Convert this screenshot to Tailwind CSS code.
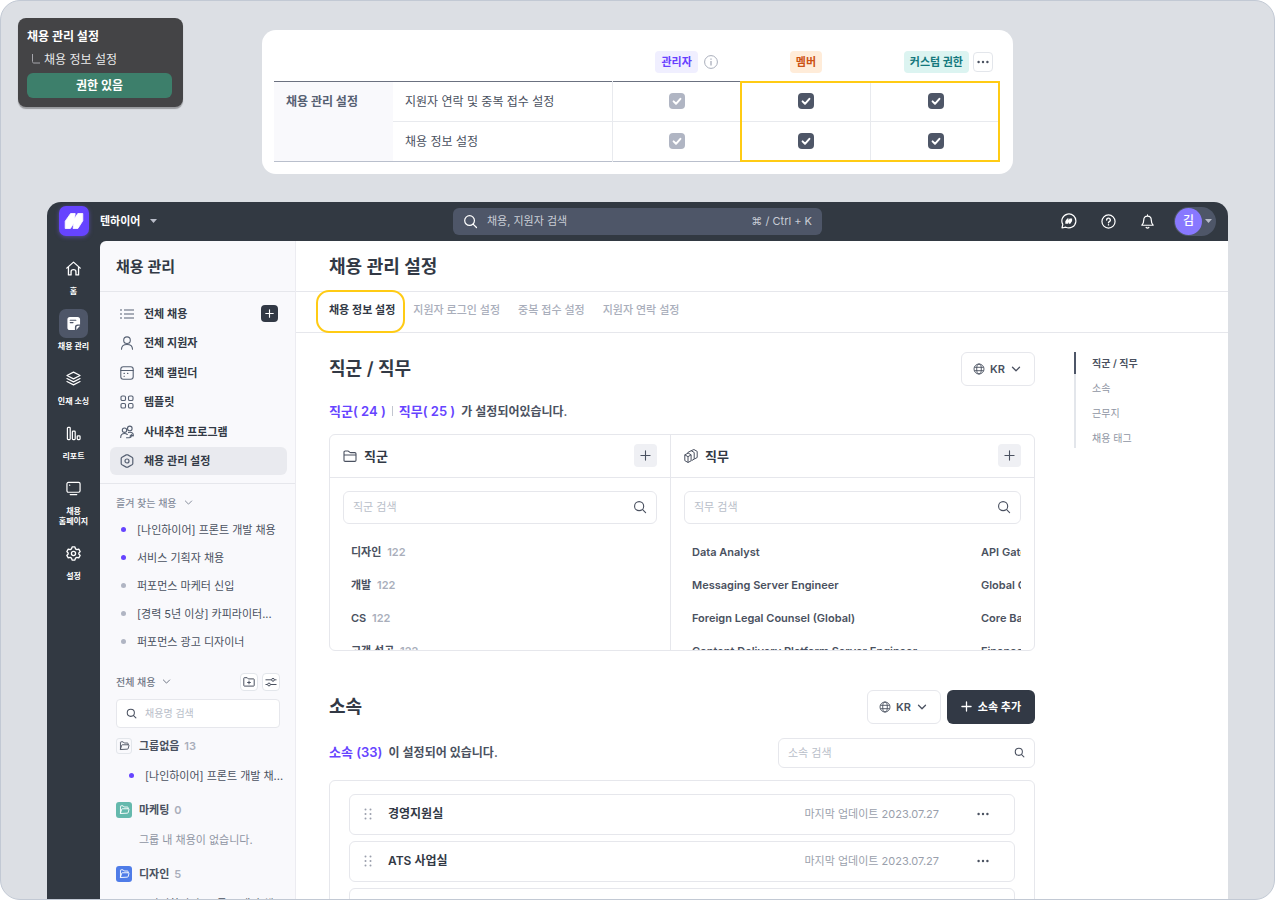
<!DOCTYPE html>
<html lang="ko">
<head>
<meta charset="utf-8">
<meta name="viewport" content="width=device-width, initial-scale=1">
<title>채용 관리 설정</title>
<script src="https://cdn.jsdelivr.net/npm/@tailwindcss/browser@4"></script>
</head>
<body class="bg-white font-['Inter','Noto_Sans_CJK_KR',sans-serif] text-[11px] leading-4 text-[#4a5160]">

<!-- shared icon shapes -->
<svg class="hidden" aria-hidden="true">
  <symbol id="i-search" viewBox="0 0 16 16" fill="none" stroke="currentColor" stroke-linecap="round"><circle cx="7" cy="7" r="5.2"/><path d="M11 11l3.4 3.4"/></symbol>
  <symbol id="i-plus" viewBox="0 0 12 12" fill="none" stroke="currentColor" stroke-linecap="round"><path d="M6 1v10M1 6h10"/></symbol>
  <symbol id="i-chevron" viewBox="0 0 10 10" fill="none" stroke="currentColor" stroke-linecap="round" stroke-linejoin="round"><path d="M1.5 3.3L5 6.8l3.5-3.5"/></symbol>
  <symbol id="i-check" viewBox="0 0 16 16" fill="none" stroke="currentColor" stroke-width="2" stroke-linecap="round" stroke-linejoin="round"><path d="M4.6 8.4l2.4 2.4 4.4-5"/></symbol>
  <symbol id="i-dots" viewBox="0 0 14 4" fill="currentColor"><circle cx="2.6" cy="2" r="1.2"/><circle cx="7" cy="2" r="1.2"/><circle cx="11.4" cy="2" r="1.2"/></symbol>
  <symbol id="i-globe" viewBox="0 0 12 12" fill="none" stroke="currentColor" stroke-width="0.9"><circle cx="6" cy="6" r="5"/><ellipse cx="6" cy="6" rx="2.3" ry="5"/><path d="M1.4 4.3h9.2M1.4 7.7h9.2"/></symbol>
  <symbol id="i-n" viewBox="0 0 20 18" fill="currentColor" stroke="currentColor" stroke-width=".8" stroke-linejoin="round"><path d="M1.200 16.500V9.200L6.600 1.500h4.600L10.600 6.600l3.200-5.100h5V8.800l-4.900 7.700H9.100l.7-5.300-3.400 5.300z"/></symbol>
  <symbol id="i-open" viewBox="0 0 12 12" fill="none" stroke="currentColor" stroke-width="1" stroke-linecap="round" stroke-linejoin="round"><path d="M1.600 10V2.600c0-.4.200-.6.600-.6h2.300l1.200 1.300h3.600c.4 0 .6.200.6.600v1.300M1.600 10l1.300-4.200c.1-.400.300-.6.700-.6h6.800c.4 0 .6.300.5.700l-.9 3.500c-.1.400-.3.600-.7.600z"/></symbol>
  <symbol id="i-grip" viewBox="0 0 8 12" fill="currentColor"><circle cx="1.500" cy="1.500" r="1"/><circle cx="6.500" cy="1.500" r="1"/><circle cx="1.500" cy="6" r="1"/><circle cx="6.500" cy="6" r="1"/><circle cx="1.500" cy="10.500" r="1"/><circle cx="6.500" cy="10.500" r="1"/></symbol>
</svg>

<div class="flex h-screen flex-col overflow-hidden rounded-[20px] border border-[#c2c9d4] bg-[#dcdfe4]">

  <div class="grid grid-cols-[244px_1fr_244px] px-[17px] pt-[17px]">
    <aside class="h-[89px] w-[165px] rounded-lg bg-[#444446] px-[9px] pt-[9px] text-[12px] leading-5 text-white shadow-[0_2px_1px_rgba(0,0,0,0.3)]">
      <p class="font-bold">채용 관리 설정</p>
      <p class="mt-[3px] flex items-start text-[#e9e9ea]">
        <svg class="mx-1 mt-1 h-[10px] w-[9px]" viewBox="0 0 9 10" fill="none" stroke="#a5a5ab"><path d="M1.500 0v7.500c0 1 .500 1.500 1.500 1.500h6"/></svg>채용 정보 설정
      </p>
      <p class="mt-[3px] mr-0.5 h-[25px] rounded-md bg-[#3d7f6b] text-center leading-[25px] font-bold">권한 있음</p>
    </aside>

    <section class="mt-3 rounded-[14px] bg-white pt-[11px] pr-[13px] pb-3 pl-3">
      <div class="relative">
        <table class="w-full table-fixed border-collapse text-[12px]">
          <colgroup><col class="w-[119px]"><col class="w-[219px]"><col><col><col></colgroup>
          <thead>
            <tr class="h-10 border-b border-[#6b7180] leading-[22px]">
              <td></td><td></td>
              <th class="p-0 pt-0.5 font-bold"><span class="flex items-center justify-center gap-[6px] pl-5"><span class="rounded bg-[#f0efff] px-[6px] text-[11px] text-[#6740ff]">관리자</span>
                <svg class="size-[14px] text-[#a9aebb]" viewBox="0 0 14 14" fill="none" stroke="currentColor"><circle cx="7" cy="7" r="6.400"/><path d="M7 6v4.500M7 3.400v1.300" stroke-width="1.300"/></svg></span></th>
              <th class="p-0 pt-0.5 font-bold"><span class="rounded bg-[#ffecd9] px-[6px] py-1 text-[11px] text-[#cc5214]">멤버</span></th>
              <th class="p-0 pt-0.5 font-bold"><span class="flex items-center justify-end gap-1 pr-[7px]"><span class="rounded bg-[#dcf4f1] px-[6px] text-[11px] whitespace-nowrap text-[#14787d]">커스텀 권한</span>
                <button class="grid size-5 place-items-center rounded border border-[#e3e6eb] text-[#4a5160]" aria-label="더보기"><svg class="h-1 w-[14px]"><use href="#i-dots"/></svg></button></span></th>
            </tr>
          </thead>
          <tbody>
            <tr class="h-10 border-b border-[#e8eaee]">
              <th rowspan="2" class="border-b border-[#b9bfcc] bg-[#f9f9fc] px-3 py-2.5 text-left align-top leading-5 font-bold text-[#566072]">채용 관리 설정</th>
              <td class="px-3 pt-0.5 pb-0">지원자 연락 및 중복 접수 설정</td>
              <td class="border-l border-[#e8eaee] p-0"><label class="mx-auto grid size-4 text-white"><input type="checkbox" checked disabled aria-label="관리자: 지원자 연락 및 중복 접수 설정" class="col-start-1 row-start-1 appearance-none rounded bg-[#b0b5c3]"><svg class="pointer-events-none col-start-1 row-start-1 size-4"><use href="#i-check"/></svg></label></td>
              <td class="border-l border-[#e8eaee] p-0"><label class="mx-auto grid size-4 text-white"><input type="checkbox" checked aria-label="멤버: 지원자 연락 및 중복 접수 설정" class="col-start-1 row-start-1 appearance-none rounded bg-[#4e5667]"><svg class="pointer-events-none col-start-1 row-start-1 size-4"><use href="#i-check"/></svg></label></td>
              <td class="border-l border-[#e8eaee] p-0"><label class="mx-auto grid size-4 text-white"><input type="checkbox" checked aria-label="커스텀 권한: 지원자 연락 및 중복 접수 설정" class="col-start-1 row-start-1 appearance-none rounded bg-[#4e5667]"><svg class="pointer-events-none col-start-1 row-start-1 size-4"><use href="#i-check"/></svg></label></td>
            </tr>
            <tr class="h-10 border-b border-[#b9bfcc]">
              <td class="px-3 pt-0.5 pb-0">채용 정보 설정</td>
              <td class="border-l border-[#e8eaee] p-0"><label class="mx-auto grid size-4 text-white"><input type="checkbox" checked disabled aria-label="관리자: 채용 정보 설정" class="col-start-1 row-start-1 appearance-none rounded bg-[#b0b5c3]"><svg class="pointer-events-none col-start-1 row-start-1 size-4"><use href="#i-check"/></svg></label></td>
              <td class="border-l border-[#e8eaee] p-0"><label class="mx-auto grid size-4 text-white"><input type="checkbox" checked aria-label="멤버: 채용 정보 설정" class="col-start-1 row-start-1 appearance-none rounded bg-[#4e5667]"><svg class="pointer-events-none col-start-1 row-start-1 size-4"><use href="#i-check"/></svg></label></td>
              <td class="border-l border-[#e8eaee] p-0"><label class="mx-auto grid size-4 text-white"><input type="checkbox" checked aria-label="커스텀 권한: 채용 정보 설정" class="col-start-1 row-start-1 appearance-none rounded bg-[#4e5667]"><svg class="pointer-events-none col-start-1 row-start-1 size-4"><use href="#i-check"/></svg></label></td>
            </tr>
          </tbody>
        </table>
        <div class="pointer-events-none absolute top-10 right-0 bottom-0 left-[calc(337px+(100%-338px)/3)] border-2 border-[#ffcb14]"></div>
      </div>
    </section>
  </div>

  <div class="mx-[46px] mt-7 flex min-h-0 flex-1 flex-col overflow-hidden rounded-t-[14px] bg-[#323942]">
    <header class="grid h-[39px] shrink-0 grid-cols-[1fr_369px_1fr] items-center">
      <div class="flex items-center">
        <span class="flex w-[53px] justify-center"><a href="#" aria-label="홈으로" class="grid size-[30px] place-items-center rounded-[7px] bg-[#6644ff] text-white shadow-[0_1px_4px_rgba(110,90,220,0.6)]"><svg class="h-[18px] w-5"><use href="#i-n"/></svg></a></span>
        <button class="flex items-center gap-[10px] text-[11px] font-bold text-white">텐하이어 <svg class="h-1 w-[7px]" viewBox="0 0 7 4" fill="#b9bdc9"><path d="M0 0h7L3.500 4z"/></svg></button>
      </div>
      <label class="flex h-[27px] items-center rounded-md bg-[#4e5668] px-[10px] text-[#c9cdd6]">
        <svg class="size-[15px] text-white" stroke-width="1.300"><use href="#i-search"/></svg>
        <input type="search" aria-label="채용, 지원자 검색" placeholder="채용, 지원자 검색" class="ml-[9px] min-w-0 flex-1 bg-transparent outline-none placeholder:text-[#c9cdd6]">
        <span>⌘ / Ctrl + K</span>
      </label>
      <div class="flex items-center justify-end pr-3 text-white">
        <button aria-label="채팅" class="mr-6"><svg class="size-4" viewBox="0 0 16 16" fill="none" stroke="currentColor" stroke-width="1.200" stroke-linejoin="round"><path d="M1 15l.8-3.600A7 7 0 1 1 4.800 14.200z"/><path d="M4.300 10.800V8.200l1.900-2.700h1.500l-.3 1.900 1.200-1.900h2.500v2.400l-1.800 2.900H7.700l.3-1.900-1.200 1.900z" fill="currentColor" stroke="none"/></svg></button>
        <button aria-label="도움말" class="mr-6"><svg class="size-[15px]" viewBox="0 0 16 16" fill="none" stroke="currentColor" stroke-width="1.300" stroke-linecap="round"><circle cx="8" cy="8" r="7"/><path d="M6 6.500a2 2 0 1 1 2.900 1.700c-.6.300-.9.600-.9 1.200M8 11.400v.2" stroke-width="1.500"/></svg></button>
        <button aria-label="알림" class="mr-[19px]"><svg class="size-[15px]" viewBox="0 0 16 16" fill="none" stroke="currentColor" stroke-width="1.300" stroke-linecap="round" stroke-linejoin="round"><path d="M8 1v1.200M8 2.200c2.600 0 4 1.900 4 4.200 0 3 .8 4.200 2 5.600H2c1.200-1.400 2-2.600 2-5.600 0-2.300 1.400-4.200 4-4.200zM6.600 14.400c.7.600 2.100.6 2.800 0"/></svg></button>
        <button aria-label="내 계정" class="flex h-[29px] w-[42px] items-center rounded-full bg-[#4e5668] pl-px"><span class="grid size-[27px] place-items-center rounded-full bg-[#8878ff] text-[12px] font-medium">김</span><svg class="ml-[3px] h-1 w-[7px]" viewBox="0 0 7 4" fill="#b9bdc9"><path d="M0 0h7L3.500 4z"/></svg></button>
      </div>
    </header>

    <div class="flex min-h-0 flex-1">
      <nav aria-label="주 메뉴" class="flex w-[53px] shrink-0 flex-col items-center gap-[13px] pt-[13px] text-center text-[8px] leading-[10px] font-bold text-white">
        <a href="#" class="flex flex-col items-center gap-[3px]"><span class="grid size-[29px] place-items-center"><svg class="size-[15px]" viewBox="0 0 16 16" fill="none" stroke="currentColor" stroke-width="1.400" stroke-linecap="round" stroke-linejoin="round"><path d="M.8 7.600L8 1.200l7.200 6.400M2.600 6.200V14.800H5.400V11.500c0-3 5.200-3 5.200 0v3.300h2.800V6.200"/></svg></span>홈</a>
        <a href="#" aria-current="page" class="flex flex-col items-center gap-[3px]"><span class="grid size-[29px] place-items-center rounded-[7px] bg-[#4e5668]"><svg class="size-[15px]" viewBox="0 0 16 16"><path d="M4 1h8.500C14 1 15 2 15 3.500V9h-2.500C10.500 9 9.500 10 9.500 12v3H4c-1.500 0-2.500-1-2.500-2.500v-9C1.500 2 2.500 1 4 1z" fill="#fff"/><path d="M11 15v-2.500c0-1.200.6-2 2-2h2z" fill="#fff"/><path d="M4.500 7h3M4.500 4.500h6" stroke="#4e5668" stroke-width="1.200" stroke-linecap="round"/></svg></span>채용 관리</a>
        <a href="#" class="flex flex-col items-center gap-[3px]"><span class="grid size-[29px] place-items-center"><svg class="size-[15px]" viewBox="0 0 16 16" fill="none" stroke="currentColor" stroke-width="1.200" stroke-linejoin="round" stroke-linecap="round"><path d="M8 1.200l7 3.600-7 3.600-7-3.600zM1 8l7 3.600L15 8M1 11.200l7 3.600 7-3.600"/></svg></span>인재 소싱</a>
        <a href="#" class="flex flex-col items-center gap-[3px]"><span class="grid size-[29px] place-items-center"><svg class="size-[15px]" viewBox="0 0 16 16" fill="none" stroke="currentColor" stroke-width="1.300"><rect x="1.500" y="1.500" width="3" height="13" rx=".8"/><rect x="6.800" y="5.500" width="3" height="9" rx=".8"/><rect x="12" y="10.500" width="3" height="4" rx=".8"/></svg></span>리포트</a>
        <a href="#" class="flex flex-col items-center gap-[3px]"><span class="grid size-[29px] place-items-center"><svg class="size-[15px]" viewBox="0 0 16 16" fill="none" stroke="currentColor" stroke-width="1.300" stroke-linecap="round"><rect x="1" y="1.500" width="14" height="10.500" rx="1.500"/><path d="M4.500 14.500h7M3.800 4.500h.2"/></svg></span><span>채용<br>홈페이지</span></a>
        <a href="#" class="flex flex-col items-center gap-[3px]"><span class="grid size-[29px] place-items-center"><svg class="size-[15px]" viewBox="0 0 16 16" fill="none" stroke="currentColor" stroke-width="1.400" stroke-linejoin="round"><path d="M6.500 1h3l.6 2 1.500.9 2-.5 1.500 2.600L13.700 7.500v1l1.400 1.500-1.500 2.600-2-.5-1.500.9-.6 2h-3l-.6-2-1.500-.9-2 .5L.9 10l1.400-1.500v-1L.9 6l1.500-2.600 2 .5L5.900 3z"/><circle cx="8" cy="8" r="2.200"/></svg></span>설정</a>
      </nav>

      <aside class="flex w-[196px] shrink-0 flex-col overflow-hidden rounded-tl-md border-r border-[#ececf1] bg-[#f9f9fc]">
        <h2 class="h-[51px] shrink-0 border-b border-[#e6e7ec] pl-4 text-[15px] leading-[52px] font-semibold text-[#323945]">채용 관리</h2>
        <nav aria-label="채용 관리" class="flex h-[192px] shrink-0 flex-col justify-between border-b border-[#e6e7ec] pt-2 pr-[8px] pb-[7px] pl-[10px] font-semibold text-[#323945]">
          <div class="flex items-center justify-between pr-[9px]">
            <a href="#" class="flex h-7 items-center gap-[10px] pl-[10px]"><svg class="size-[14px] text-[#566072]" viewBox="0 0 14 14" fill="none" stroke="currentColor" stroke-width="1.200"><path d="M4 3h10M4 7h10M4 11h10M0 3h2M0 7h2M0 11h2"/></svg>전체 채용</a>
            <button aria-label="채용 추가" class="grid size-[17px] place-items-center rounded bg-[#323945] text-white"><svg class="size-[9px]" stroke-width="1.500"><use href="#i-plus"/></svg></button>
          </div>
          <a href="#" class="flex h-7 items-center gap-[10px] pl-[10px]"><svg class="size-[14px] text-[#566072]" viewBox="0 0 14 14" fill="none" stroke="currentColor" stroke-width="1.100" stroke-linecap="round"><circle cx="7" cy="4.200" r="3.300"/><path d="M1.500 13.300c0-3 2-4.800 5.500-4.800s5.500 1.800 5.500 4.800"/></svg>전체 지원자</a>
          <a href="#" class="flex h-7 items-center gap-[10px] pl-[10px]"><svg class="size-[14px] text-[#566072]" viewBox="0 0 14 14" fill="none" stroke="currentColor" stroke-width="1.100" stroke-linecap="round"><rect x=".8" y=".8" width="12.400" height="12.400" rx="2.500"/><path d="M.8 4.500h12.400M4 7.400h.4M7.500 7.400h.4M4 10.300h.4" /></svg>전체 캘린더</a>
          <a href="#" class="flex h-7 items-center gap-[10px] pl-[10px]"><svg class="size-[14px] text-[#566072]" viewBox="0 0 14 14" fill="none" stroke="currentColor" stroke-width="1.100"><rect x="1" y="1" width="4.500" height="4.500" rx="1.300"/><rect x="8.500" y="1" width="4.500" height="4.500" rx="1.300"/><rect x="1" y="8.500" width="4.500" height="4.500" rx="1.300"/><rect x="8.500" y="8.500" width="4.500" height="4.500" rx="1.300"/></svg>템플릿</a>
          <a href="#" class="flex h-7 items-center gap-[10px] pl-[10px]"><svg class="size-[14px] text-[#566072]" viewBox="0 0 14 14" fill="none" stroke="currentColor" stroke-width="1.100" stroke-linecap="round" stroke-linejoin="round"><circle cx="4.500" cy="5.200" r="2.200"/><circle cx="9.800" cy="3.400" r="2.300"/><path d="M.7 12.500c0-2.300 1.300-4 3.800-4 1.300 0 2.200.4 2.800 1M8.500 7.600c2.800-.9 4.900.4 4.900 2.800M6.500 12.800h2.700c1.300 0 2.200-.8 2.200-2.200M10 11.200l1.500-1.500 1.500 1.500"/></svg>사내추천 프로그램</a>
          <a href="#" aria-current="page" class="flex h-7 items-center gap-[10px] rounded-md bg-[#e9eaef] pl-[10px]"><svg class="size-[14px] text-[#566072]" viewBox="0 0 14 14" fill="none" stroke="currentColor" stroke-width="1.200" stroke-linejoin="round"><path d="M6.200.9a1.600 1.600 0 0 1 1.600 0l4.200 2.300c.5.300.8.800.8 1.400v4.800c0 .6-.3 1.100-.8 1.400l-4.200 2.300a1.600 1.600 0 0 1-1.600 0L2 10.800c-.5-.3-.8-.8-.8-1.400V4.600c0-.6.300-1.100.8-1.400z"/><circle cx="7" cy="7" r="2"/></svg>채용 관리 설정</a>
        </nav>

        <div class="shrink-0 pt-[11px] pr-[15px] pl-4">
          <button class="flex items-center gap-[7px] text-[10px] font-medium text-[#868d9b]">즐겨 찾는 채용 <svg class="size-[9px]" stroke-width="1.100"><use href="#i-chevron"/></svg></button>
          <ul class="mt-[5px] whitespace-nowrap">
            <li class="flex h-7 items-center pl-[5px]"><span class="mr-[11px] size-[5px] rounded-full bg-[#6644ff]"></span><a href="#">[나인하이어] 프론트 개발 채용</a></li>
            <li class="flex h-7 items-center pl-[5px]"><span class="mr-[11px] size-[5px] rounded-full bg-[#6644ff]"></span><a href="#">서비스 기획자 채용</a></li>
            <li class="flex h-7 items-center pl-[5px]"><span class="mr-[11px] size-[5px] rounded-full bg-[#b0b5c3]"></span><a href="#">퍼포먼스 마케터 신입</a></li>
            <li class="flex h-7 items-center pl-[5px]"><span class="mr-[11px] size-[5px] rounded-full bg-[#b0b5c3]"></span><a href="#">[경력 5년 이상] 카피라이터...</a></li>
            <li class="flex h-7 items-center pl-[5px]"><span class="mr-[11px] size-[5px] rounded-full bg-[#b0b5c3]"></span><a href="#">퍼포먼스 광고 디자이너</a></li>
          </ul>
          <div class="mt-[17px] flex items-center gap-1">
            <button class="mr-auto flex items-center gap-[7px] text-[10px] font-medium text-[#6f7685]">전체 채용 <svg class="size-[9px]" stroke-width="1.100"><use href="#i-chevron"/></svg></button>
            <button aria-label="그룹 추가" class="grid size-[18px] place-items-center rounded border border-[#e3e6eb] bg-white"><svg class="size-3" viewBox="0 0 12 12" fill="none" stroke="currentColor" stroke-linejoin="round"><path d="M.8 2.300c0-.4.200-.6.600-.6h2.800l1.100 1.200h5.300c.4 0 .6.200.6.600v6c0 .4-.2.600-.6.600H1.400c-.4 0-.6-.2-.6-.6zM6 4.700v3.600M4.200 6.500h3.600"/></svg></button>
            <button aria-label="정렬" class="grid size-[18px] place-items-center rounded border border-[#e3e6eb] bg-white"><svg class="size-3" viewBox="0 0 12 12" fill="none" stroke="currentColor"><path d="M.5 3.800h6M9.500 3.800h2M.5 8.500h2M5.500 8.500h6"/><circle cx="8" cy="3.800" r="1.400"/><circle cx="4" cy="8.500" r="1.400"/></svg></button>
          </div>
          <label class="mt-2 flex h-[29px] items-center gap-2 rounded border border-[#e6e7ec] bg-white px-[9px] text-[10px]"><svg class="size-[11px]" stroke-width="1.500"><use href="#i-search"/></svg><input type="search" aria-label="채용명 검색" placeholder="채용명 검색" class="min-w-0 flex-1 outline-none placeholder:text-[#b9bec9]"></label>
          <div class="mt-[9px] flex h-[18px] items-center gap-[7px] font-semibold"><span class="grid size-4 place-items-center rounded-[3px] border border-[#e3e6eb]"><svg class="size-[11px]"><use href="#i-open"/></svg></span><span>그룹없음 <span class="ml-0.5 text-[#a9aebb]">13</span></span></div>
          <div class="mt-[7px] flex h-7 items-center pl-[13px] whitespace-nowrap"><span class="mr-[11px] size-[5px] shrink-0 rounded-full bg-[#6644ff]"></span><a href="#">[나인하이어] 프론트 개발 채...</a></div>
          <div class="mt-[11px] flex h-[18px] items-center gap-[7px] font-semibold"><span class="grid size-4 place-items-center rounded-[3px] bg-[#65b9ad] text-white"><svg class="size-[11px]"><use href="#i-open"/></svg></span><span>마케팅 <span class="ml-0.5 text-[#a9aebb]">0</span></span></div>
          <p class="mt-[7px] flex h-7 items-center pl-[23px] text-[#8f95a3]">그룹 내 채용이 없습니다.</p>
          <div class="mt-[11px] flex h-[18px] items-center gap-[7px] font-semibold"><span class="grid size-4 place-items-center rounded-[3px] bg-[#4f7ce8] text-white"><svg class="size-[11px]"><use href="#i-open"/></svg></span><span>디자인 <span class="ml-0.5 text-[#a9aebb]">5</span></span></div>
          <div class="mt-[7px] flex h-7 items-center pl-[13px] whitespace-nowrap"><span class="mr-[11px] size-[5px] shrink-0 rounded-full bg-[#6644ff]"></span><a href="#">[나인하이어] 프론트 개발 채...</a></div>
        </div>
      </aside>

      <main class="min-w-0 flex-1 overflow-hidden bg-white">
        <h1 class="h-[51px] border-b border-[#e6e7ec] pl-[33px] text-[18px] leading-[52px] font-semibold text-[#323945]">채용 관리 설정</h1>
        <nav aria-label="설정 탭" class="flex h-[41px] gap-[18px] border-b border-[#e6e7ec] pl-[33px] leading-9 font-medium text-[#a9aebb]">
          <a href="#" aria-current="page" class="relative font-semibold text-[#323945]">채용 정보 설정<span class="pointer-events-none absolute -top-0.5 -right-[10px] -left-[13px] h-[43px] rounded-[13px] border-2 border-[#ffcb14]"></span></a>
          <a href="#">지원자 로그인 설정</a>
          <a href="#">중복 접수 설정</a>
          <a href="#">지원자 연락 설정</a>
        </nav>

        <div class="flex pt-[19px] pl-[33px]">
          <div class="min-w-0 flex-1">
            <section>
              <div class="flex h-[34px] items-center justify-between">
                <h2 class="text-[18px] leading-[26px] font-semibold text-[#323945]">직군 / 직무</h2>
                <div class="relative">
                  <select aria-label="언어" class="block h-[34px] w-[74px] appearance-none rounded-md border border-[#e6e7ec] bg-white pl-[28px] text-[11px] font-semibold"><option>KR</option><option>EN</option></select>
                  <svg class="pointer-events-none absolute top-[11px] left-3 size-3"><use href="#i-globe"/></svg>
                  <svg class="pointer-events-none absolute top-3 right-[14px] size-[10px]" stroke-width="1.300"><use href="#i-chevron"/></svg>
                </div>
              </div>
              <p class="mt-[17px] text-[12px] font-semibold whitespace-pre"><span class="text-[13px] text-[#6644ff]">직군( 24 )</span><span class="mx-[6px] inline-block h-[10px] w-px bg-[#c2c6d0]"></span><span class="text-[13px] text-[#6644ff]">직무( 25 )</span>  가 설정되어있습니다.</p>

              <div class="mt-[14px] flex h-[217px] overflow-hidden rounded-md border border-[#e6e7ec]">
                <div class="w-[341px] border-r border-[#e6e7ec]">
                  <div class="flex h-[43px] items-center border-b border-[#e6e7ec] px-[13px]">
                    <svg class="mr-[7px] size-[14px]" viewBox="0 0 14 14" fill="none" stroke="currentColor" stroke-width="1.100" stroke-linejoin="round"><path d="M1 3.200c0-.8.400-1.200 1.200-1.200h2.600c.9 0 1 .3 1.400.8.400.6.700.8 1.400.8h4.200c.8 0 1.200.4 1.200 1.200v6.400c0 .8-.4 1.200-1.200 1.200H2.200c-.8 0-1.200-.4-1.200-1.200zM1 6h12"/></svg>
                    <h3 class="text-[13px] font-semibold text-[#323945]">직군</h3>
                    <button aria-label="직군 추가" class="ml-auto grid size-[23px] place-items-center rounded bg-[#eff0f4]"><svg class="size-[11px]" stroke-width="1.200"><use href="#i-plus"/></svg></button>
                  </div>
                  <div class="px-[13px] pt-[13px]">
                    <label class="flex h-[33px] items-center rounded-md border border-[#e6e7ec] px-[9px]"><input type="search" aria-label="직군 검색" placeholder="직군 검색" class="min-w-0 flex-1 outline-none placeholder:text-[#b9bec9]"><svg class="size-[14px]" stroke-width="1.300"><use href="#i-search"/></svg></label>
                    <ul class="mt-3 pl-2 leading-[33px] font-semibold">
                      <li>디자인 <span class="ml-[3px] text-[#a9aebb]">122</span></li>
                      <li>개발 <span class="ml-[3px] text-[#a9aebb]">122</span></li>
                      <li>CS <span class="ml-[3px] text-[#a9aebb]">122</span></li>
                      <li>고객 성공 <span class="ml-[3px] text-[#a9aebb]">122</span></li>
                    </ul>
                  </div>
                </div>
                <div class="min-w-0 flex-1">
                  <div class="flex h-[43px] items-center border-b border-[#e6e7ec] px-[13px]">
                    <svg class="mr-[7px] size-[14px]" viewBox="0 0 14 14" fill="none" stroke="currentColor" stroke-width="1" stroke-linejoin="round"><path d="M.8 5.800l3.400-1.700 2.900 1.700v6L4 13.500.8 11.600zM.8 5.800L4 7.700v5.600M4 7.700l3.100-1.900M3.800 4.300v-.8l3.400-1.800 3 1.800v6.600l-2.500 1.500M6.800 1.900L9.900.5 13.200 2.400v6.100l-2.800 1.500"/></svg>
                    <h3 class="text-[13px] font-semibold text-[#323945]">직무</h3>
                    <button aria-label="직무 추가" class="ml-auto grid size-[23px] place-items-center rounded bg-[#eff0f4]"><svg class="size-[11px]" stroke-width="1.200"><use href="#i-plus"/></svg></button>
                  </div>
                  <div class="px-[13px] pt-[13px]">
                    <label class="flex h-[33px] items-center rounded-md border border-[#e6e7ec] px-[9px]"><input type="search" aria-label="직무 검색" placeholder="직무 검색" class="min-w-0 flex-1 outline-none placeholder:text-[#b9bec9]"><svg class="size-[14px]" stroke-width="1.300"><use href="#i-search"/></svg></label>
                    <div class="mt-3 grid grid-cols-[289px_1fr] overflow-hidden pl-2 leading-[33px] font-semibold whitespace-nowrap">
                      <span>Data Analyst</span><span class="min-w-0">API Gateway</span>
                      <span>Messaging Server Engineer</span><span class="min-w-0">Global Commerce</span>
                      <span>Foreign Legal Counsel (Global)</span><span class="min-w-0">Core Banking</span>
                      <span>Content Delivery Platform Server Engineer</span><span class="min-w-0">Finance Manager</span>
                    </div>
                  </div>
                </div>
              </div>
            </section>

            <section class="mt-[39px]">
              <div class="flex h-[34px] items-center gap-[6px]">
                <h2 class="mr-auto text-[18px] leading-[26px] font-semibold text-[#323945]">소속</h2>
                <div class="relative">
                  <select aria-label="소속 언어" class="block h-[34px] w-[74px] appearance-none rounded-md border border-[#e6e7ec] bg-white pl-[28px] text-[11px] font-semibold"><option>KR</option><option>EN</option></select>
                  <svg class="pointer-events-none absolute top-[11px] left-3 size-3"><use href="#i-globe"/></svg>
                  <svg class="pointer-events-none absolute top-3 right-[14px] size-[10px]" stroke-width="1.300"><use href="#i-chevron"/></svg>
                </div>
                <button class="flex h-[34px] w-[88px] items-center justify-center gap-[6px] rounded-md bg-[#323945] font-semibold text-white"><svg class="size-[11px]" stroke-width="1.400"><use href="#i-plus"/></svg>소속 추가</button>
              </div>
              <div class="mt-[14px] flex items-center justify-between">
                <p class="text-[12px] font-semibold whitespace-pre"><span class="text-[13px] text-[#6644ff]">소속 (33)</span>  이 설정되어 있습니다.</p>
                <label class="flex h-[30px] w-[257px] items-center rounded-md border border-[#e6e7ec] px-[9px]"><input type="search" aria-label="소속 검색" placeholder="소속 검색" class="min-w-0 flex-1 outline-none placeholder:text-[#b9bec9]"><svg class="size-[11px]" stroke-width="1.500"><use href="#i-search"/></svg></label>
              </div>
              <ul class="mt-3 flex flex-col gap-[6px] rounded-md border border-[#e6e7ec] px-[19px] pt-[13px] pb-4">
                <li class="flex h-[41px] items-center rounded-md border border-[#e6e7ec] pr-6 pl-[14px]"><svg class="mr-4 h-3 w-2 text-[#9a9fac]"><use href="#i-grip"/></svg><span class="text-[12px] font-semibold text-[#323945]">경영지원실</span><span class="mr-[37px] ml-auto text-[#9a9fac]">마지막 업데이트 2023.07.27</span><button aria-label="더보기"><svg class="h-1 w-[14px]"><use href="#i-dots"/></svg></button></li>
                <li class="flex h-[41px] items-center rounded-md border border-[#e6e7ec] pr-6 pl-[14px]"><svg class="mr-4 h-3 w-2 text-[#9a9fac]"><use href="#i-grip"/></svg><span class="text-[12px] font-semibold text-[#323945]">ATS 사업실</span><span class="mr-[37px] ml-auto text-[#9a9fac]">마지막 업데이트 2023.07.27</span><button aria-label="더보기"><svg class="h-1 w-[14px]"><use href="#i-dots"/></svg></button></li>
                <li class="flex h-[41px] items-center rounded-md border border-[#e6e7ec]"></li>
              </ul>
            </section>
          </div>

          <nav aria-label="목차" class="ml-[39px] h-24 w-[154px] shrink-0 border-l-2 border-[#e3e6eb] text-[10px] leading-[22px] text-[#8f95a3]">
            <ul class="flex flex-col gap-[3px]">
              <li class="-ml-0.5 border-l-2 border-[#4e5668] pl-4 font-semibold text-[#4a5160]"><a href="#">직군 / 직무</a></li>
              <li class="pl-4"><a href="#">소속</a></li>
              <li class="pl-4"><a href="#">근무지</a></li>
              <li class="pl-4"><a href="#">채용 태그</a></li>
            </ul>
          </nav>
        </div>
      </main>
    </div>
  </div>
</div>
</body>
</html>
